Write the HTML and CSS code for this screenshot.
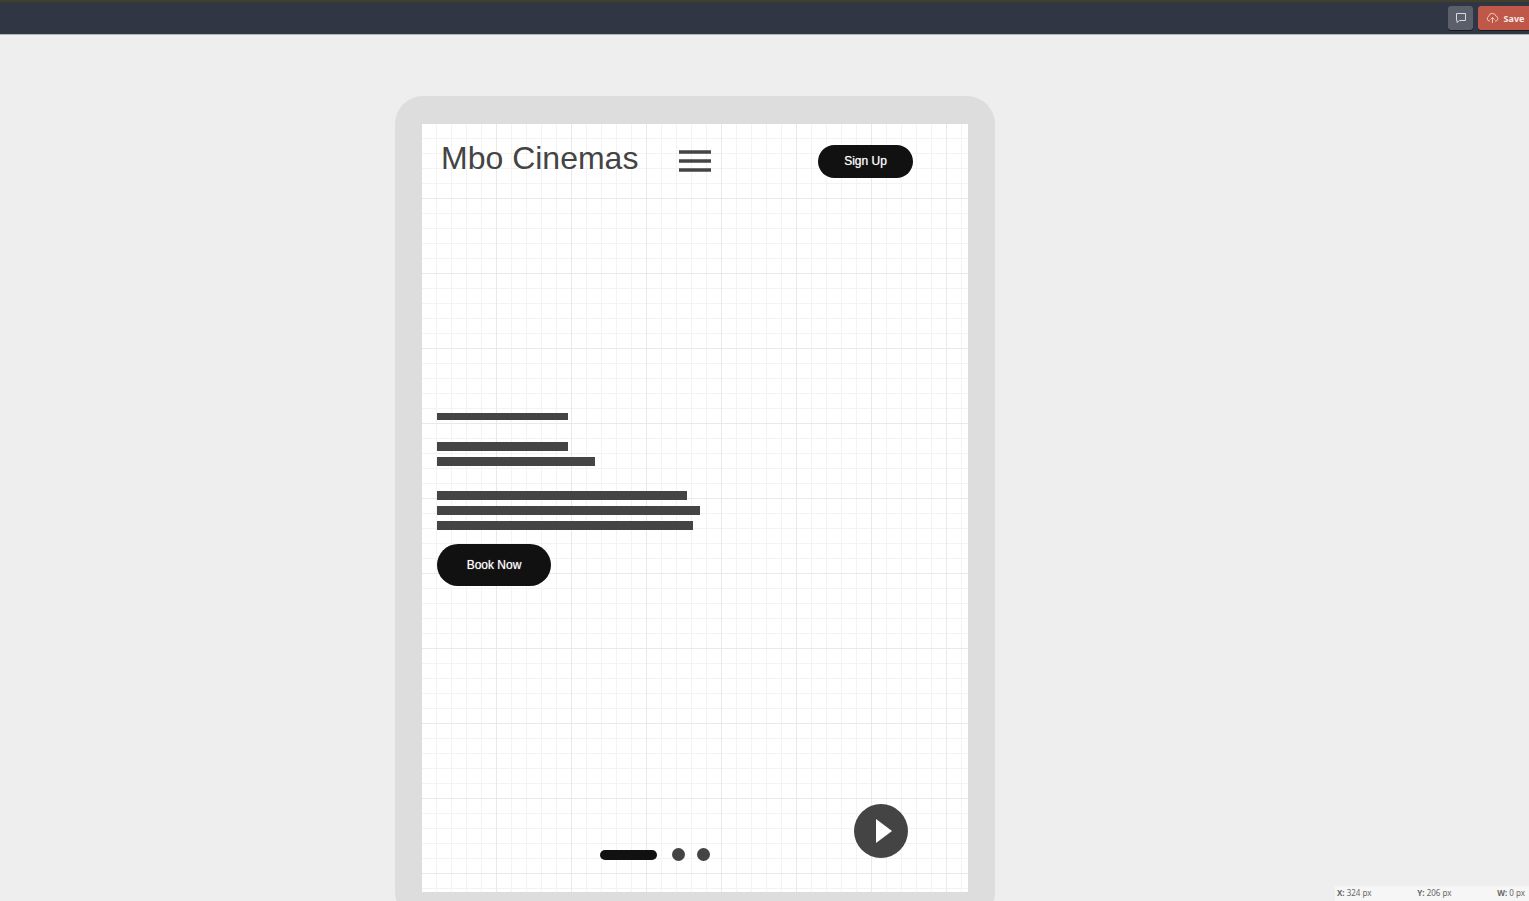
FILE: index.html
```html
<!DOCTYPE html>
<html lang="en">
<head>
<meta charset="utf-8">
<title>Mbo Cinemas wireframe</title>
<link rel="stylesheet" href="styles.css">
</head>
<body>
<header class="toolbar">
  <button class="tool comment" type="button" aria-label="Comments">
    <svg width="12" height="12" viewBox="0 0 12 12"><path d="M1.500 1.500h9v7h-6l-2.500 2v-2h-.5z" fill="none" stroke="#d5d8dc"/></svg>
  </button>
  <button class="tool save" type="button">
    <svg width="13" height="12" viewBox="0 0 13 12" fill="none" stroke="#efc4bc"><path d="M4 9H3.200A2.400 2.400 0 0 1 2.700 4.400A3.700 3.700 0 0 1 9.900 4A2.600 2.600 0 0 1 10 9H9M6.500 11V5.500M4.500 7.500l2-2 2 2"/></svg>
    <span>Save</span>
  </button>
</header>
<main class="workspace">
  <div class="device">
    <div class="screen">
      <div class="nav">
        <h1 class="brand">Mbo Cinemas</h1>
        <button class="menu" type="button" aria-label="Menu">
          <svg width="32" height="22" viewBox="0 0 32 22"><path d="M0 2h32M0 11h32M0 20h32" stroke="#444" stroke-width="3.400"/></svg>
        </button>
        <button class="pill signup" type="button">Sign Up</button>
      </div>
      <section class="hero">
        <div class="bar thin short"></div>
        <div class="lines">
          <div class="bar short"></div>
          <div class="bar medium"></div>
        </div>
        <div class="lines">
          <div class="bar para-a"></div>
          <div class="bar para-b"></div>
          <div class="bar para-c"></div>
        </div>
        <button class="pill book" type="button">Book Now</button>
      </section>
      <div class="controls">
        <div class="pager">
          <span class="dash"></span>
          <span class="dot"></span>
          <span class="dot"></span>
        </div>
        <button class="play" type="button" aria-label="Play">
          <svg width="54" height="54" viewBox="0 0 54 54"><circle cx="27" cy="27" r="27" fill="#444"/><path d="M22 15v24l16-12z" fill="#fff"/></svg>
        </button>
      </div>
    </div>
  </div>
</main>
<footer class="status">
  <span><b>X:</b> 324 px</span>
  <span><b>Y:</b> 206 px</span>
  <span><b>W:</b> 0 px</span>
</footer>
</body>
</html>
```
FILE: styles.css
```css
* { box-sizing: border-box; }

body {
  margin: 0;
  height: 100vh;
  overflow: hidden;
  display: flex;
  flex-direction: column;
  background: #eee;
  font-family: "Liberation Sans", Arial, sans-serif;
}

button {
  margin: 0;
  padding: 0;
  border: 0;
  background: none;
  font-family: inherit;
}

svg { display: block; }

.toolbar {
  flex: none;
  height: 35px;
  display: flex;
  justify-content: flex-end;
  gap: 5px;
  padding-top: 4px;
  background: #303643;
  border-top: 2px solid #3f3f2a;
  border-bottom: 1px solid #b4b5b9;
}

.tool {
  height: 24px;
  display: flex;
  align-items: center;
  justify-content: center;
  border-radius: 3px;
  box-shadow: 0 1px 0 #15181f;
}

.comment {
  width: 25px;
  background: #5a5f69;
}

.save {
  width: 51px;
  gap: 5px;
  padding-left: 3px;
  border-radius: 3px 0 0 3px;
  background: #bf5849;
  color: #fbeae7;
  font: bold 9px "Noto Sans", sans-serif;
}

.workspace {
  flex: 1;
  min-height: 0;
  display: flex;
  align-items: flex-start;
  justify-content: center;
  padding: 61px 139px 0 0;
}

.device {
  flex: none;
  padding: 28px 27px;
  border-radius: 28px;
  background: #ddd;
}

.screen {
  width: 546px;
  height: 768px;
  display: flex;
  flex-direction: column;
  padding: 14px 55px 31px 15px;
  background-color: #fff;
  background-image:
    linear-gradient(to right, transparent 74px, #e9e9e9 74px),
    linear-gradient(to bottom, transparent 74px, #e9e9e9 74px),
    linear-gradient(to right, transparent 14px, #f3f3f3 14px),
    linear-gradient(to bottom, transparent 14px, #f3f3f3 14px);
  background-size: 75px 75px, 75px 75px, 15px 15px, 15px 15px;
}

.nav {
  display: flex;
  align-items: flex-start;
  padding-left: 4px;
}

.brand {
  margin: 0;
  color: #444;
  font-size: 32px;
  font-weight: 400;
  line-height: 40px;
}

.menu { margin: 12px 0 0 41px; }

.pill {
  border-radius: 21px;
  background: #111;
  color: #fff;
  font-size: 12px;
  text-shadow: 0 0 1px #aaa;
}

.signup {
  width: 95px;
  height: 33px;
  margin: 7px 0 0 auto;
  padding-bottom: 2px;
}

.hero {
  display: flex;
  flex-direction: column;
  align-items: flex-start;
  margin-top: 235px;
}

.lines {
  display: flex;
  flex-direction: column;
  gap: 6px;
  margin-top: 22px;
}

.lines + .lines { margin-top: 25px; }

.bar {
  height: 9px;
  background: #444;
}

.thin { height: 7px; }
.short { width: 131px; }
.medium { width: 158px; }
.para-a { width: 250px; }
.para-b { width: 263px; }
.para-c { width: 256px; }

.book {
  width: 114px;
  height: 42px;
  margin-top: 14px;
}

.controls {
  display: flex;
  align-items: flex-end;
  justify-content: space-between;
  margin-top: auto;
  padding: 0 5px 3px 163px;
}

.pager {
  display: flex;
  align-items: center;
  gap: 12px;
  margin-bottom: -3px;
}

.dash {
  width: 57px;
  height: 10px;
  margin-right: 3px;
  border-radius: 5px;
  background: #111;
}

.dot {
  width: 13px;
  height: 13px;
  border-radius: 50%;
  background: #444;
}

.status {
  position: absolute;
  right: 0;
  bottom: 0;
  width: 194px;
  height: 15px;
  display: flex;
  justify-content: space-between;
  padding: 0 4px 0 2px;
  background: #f6f6f6;
  color: #666;
  font: 8px/14px "Noto Sans", sans-serif;
}
```
